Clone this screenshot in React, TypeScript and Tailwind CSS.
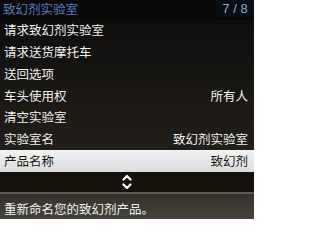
import React from "react";

const rows: { label: string; value?: string; active?: boolean }[] = [
  { label: "请求致幻剂实验室" },
  { label: "请求送货摩托车" },
  { label: "送回选项" },
  { label: "车头使用权", value: "所有人" },
  { label: "清空实验室" },
  { label: "实验室名", value: "致幻剂实验室" },
  { label: "产品名称", value: "致幻剂", active: true },
];

export default function App() {
  return (
    <div
      className="w-[254px] h-[219px] overflow-hidden flex flex-col bg-gradient-to-b from-[#0b0b0b] via-[#1d1a16] to-[#2b2620] text-[12.5px]"
      style={{ fontFamily: '"Noto Sans CJK SC", "Noto Sans", sans-serif' }}
    >
      <div className="h-[20px] flex items-start justify-between bg-[#0a0a0b]">
        <span className="pl-[3px] leading-[18px] text-[#5b7dc2]">致幻剂实验室</span>
        <span
          className="h-[17px] w-[38px] flex items-center justify-center bg-[#090d17] text-[#93a8cc] text-[13px]"
          style={{ fontFamily: '"Liberation Sans", sans-serif' }}
        >
          7 / 8
        </span>
      </div>
      {rows.map((r) => (
        <div
          key={r.label}
          className={
            r.active
              ? "h-[22px] flex items-center justify-between px-[4px] pr-[6px] bg-gradient-to-b from-[#f2f2f2] to-[#dcdcdc] text-[#161616]"
              : "h-[22px] flex items-center justify-between px-[4px] pr-[6px] text-[#f0f0f0]"
          }
        >
          <span>{r.label}</span>
          {r.value && <span>{r.value}</span>}
        </div>
      ))}
      <div className="h-[20px] flex items-center justify-center bg-[#17110b]">
        <svg width="10" height="16" viewBox="0 0 10 16" fill="none" stroke="#ffffff" strokeWidth="2.2" strokeLinecap="round" strokeLinejoin="round">
          <path d="M1.5 5.5 L5 2 L8.5 5.5" />
          <path d="M1.5 10.5 L5 14 L8.5 10.5" />
        </svg>
      </div>
      <div className="h-[2px] bg-[#5c5852]" />
      <div className="flex-1 bg-gradient-to-b from-[#34302a] to-[#46423c] px-[4px] pt-[5px] text-[#f0f0f0] leading-[20px]">
        重新命名您的致幻剂产品。
      </div>
    </div>
  );
}
